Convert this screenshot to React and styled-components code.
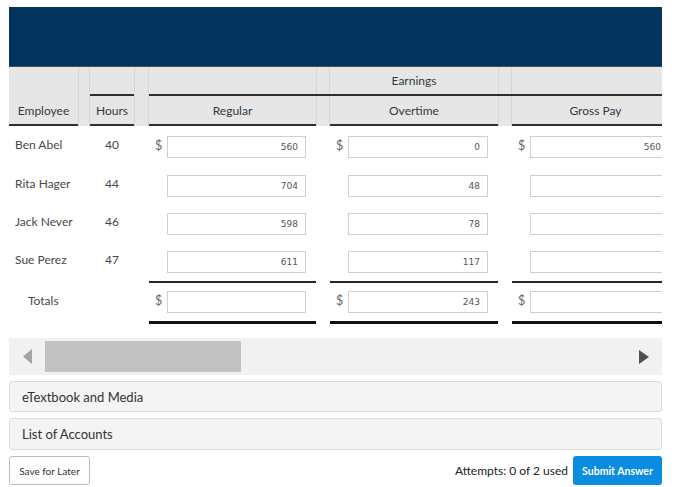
import React from 'react';
import styled, { createGlobalStyle } from 'styled-components';

const GlobalStyle = createGlobalStyle`
  html, body { margin: 0; padding: 0; background: #fff; }
  body { font-family: Lato, "Open Sans", sans-serif; }
`;

const COLS = '69px 12px 44px 15px 167px 14px 168px 14px 167px';

const Page = styled.div`
  width: 653px;
  padding: 7px 19px 0 9px;
`;

const Banner = styled.div`
  height: 59px;
  background: #02345f;
`;

const Viewport = styled.div`
  width: 653px;
  overflow: hidden;
`;

const HeadGrid = styled.div`
  display: grid;
  grid-template-columns: ${COLS};
  grid-template-rows: 29px 30px;
  width: 670px;
  background: #e6e6e6;
  border-top: 1px solid #4d4d4d;
`;

const HeadSpacer = styled.div`
  grid-column: ${p => p.$col};
  grid-row: 1 / 3;
  border-left: 1px solid #d6d6d6;
  border-right: 1px solid #d6d6d6;
`;

const HeadCell = styled.div`
  grid-column: ${p => p.$col};
  grid-row: ${p => p.$row};
  position: relative;
  z-index: 1;
  display: flex;
  align-items: center;
  justify-content: center;
  box-sizing: border-box;
  border-bottom: ${p => (p.$line ? '2px solid #2e2e2e' : 'none')};
  font-family: Lato, sans-serif;
  font-size: 12px;
  font-weight: 400;
  color: #2f3a46;
`;

const BodyGrid = styled.div`
  display: grid;
  grid-template-columns: ${COLS};
  grid-template-rows: 41px 38px 38px 38px auto;
  width: 670px;
`;

const TextCell = styled.div`
  grid-column: ${p => p.$col};
  display: flex;
  align-items: center;
  justify-content: ${p => (p.$center ? 'center' : 'flex-start')};
  padding: 0 0 5px ${p => p.$indent || 0}px;
  font-family: Lato, sans-serif;
  font-size: 12px;
  font-weight: 400;
  color: #484848;
`;

const MoneyCell = styled.div`
  grid-column: ${p => p.$col};
  display: flex;
  align-items: center;
  box-sizing: border-box;
  padding: 0 10px 0 6px;
  ${p => (p.$total ? 'height: 43px; border-top: 2px solid #262626; border-bottom: 3px solid #111;' : '')}
`;

const Dollar = styled.span`
  width: 12px;
  flex: none;
  padding-bottom: 3px;
  font-family: Lato, sans-serif;
  font-size: 12.5px;
  font-weight: 400;
  color: #666;
`;

const Field = styled.input`
  flex: 1;
  min-width: 0;
  height: 22px;
  box-sizing: border-box;
  border: 1px solid #cfcfcf;
  border-radius: 0;
  padding: 0 7px 0 4px;
  text-align: right;
  font-family: "DejaVu Sans", sans-serif;
  font-size: 9px;
  color: #555;
  background: #fff;
  outline: none;
`;

const ScrollBar = styled.div`
  margin-top: 14px;
  height: 37px;
  display: flex;
  align-items: stretch;
  background: #f1f1f1;
`;

const ArrowBtn = styled.div`
  width: 36px;
  flex: none;
  display: flex;
  align-items: center;
  justify-content: center;
`;

const Thumb = styled.div`
  width: 196px;
  margin: 3px 0;
  background: #c1c1c1;
`;

const Track = styled.div`
  flex: 1;
`;

const Panel = styled.div`
  margin-top: 6px;
  height: ${p => p.$h}px;
  box-sizing: border-box;
  display: flex;
  align-items: center;
  padding-left: 12px;
  background: #f4f4f4;
  border: 1px solid #dcdcdc;
  border-radius: 3px;
  font-family: Lato, sans-serif;
  font-size: 13px;
  color: #333;
`;

const Footer = styled.div`
  margin-top: 6px;
  display: flex;
  justify-content: space-between;
  align-items: center;
`;

const SaveButton = styled.button`
  width: 81px;
  height: 29px;
  box-sizing: border-box;
  background: #fff;
  border: 1px solid #bdbdbd;
  border-radius: 3px;
  font-family: Lato, sans-serif;
  font-size: 10px;
  color: #333;
  padding: 0;
`;

const RightGroup = styled.div`
  display: flex;
  align-items: center;
  gap: 5px;
`;

const Attempts = styled.span`
  font-family: Lato, sans-serif;
  font-size: 12px;
  color: #222;
`;

const SubmitButton = styled.button`
  width: 89px;
  height: 29px;
  box-sizing: border-box;
  background: #0a8de0;
  border: none;
  border-radius: 3px;
  font-family: Lato, sans-serif;
  font-size: 10.5px;
  font-weight: 700;
  color: #fff;
  padding: 0;
`;

const rows = [
  { name: 'Ben Abel', hours: '40', reg: '560', ot: '0', gross: '560', dollar: true },
  { name: 'Rita Hager', hours: '44', reg: '704', ot: '48', gross: '' },
  { name: 'Jack Never', hours: '46', reg: '598', ot: '78', gross: '' },
  { name: 'Sue Perez', hours: '47', reg: '611', ot: '117', gross: '' },
];

function Money({ col, value, dollar, total }) {
  return (
    <MoneyCell $col={col} $total={total}>
      <Dollar>{dollar ? '$' : ''}</Dollar>
      <Field readOnly defaultValue={value} />
    </MoneyCell>
  );
}

export default function App() {
  return (
    <>
      <GlobalStyle />
      <Page>
        <Banner />
        <Viewport>
          <HeadGrid>
            <HeadSpacer $col={2} />
            <HeadSpacer $col={4} />
            <HeadSpacer $col={6} />
            <HeadSpacer $col={8} />
            <HeadCell $col="3" $row="1" $line />
            <HeadCell $col="5 / 10" $row="1" $line>Earnings</HeadCell>
            <HeadCell $col="1" $row="2" $line>Employee</HeadCell>
            <HeadCell $col="3" $row="2" $line>Hours</HeadCell>
            <HeadCell $col="5" $row="2" $line>Regular</HeadCell>
            <HeadCell $col="7" $row="2" $line>Overtime</HeadCell>
            <HeadCell $col="9" $row="2" $line>Gross Pay</HeadCell>
          </HeadGrid>
          <BodyGrid>
            {rows.map(r => (
              <React.Fragment key={r.name}>
                <TextCell $col={1} $indent={6}>{r.name}</TextCell>
                <TextCell $col={3} $center>{r.hours}</TextCell>
                <Money col={5} value={r.reg} dollar={r.dollar} />
                <Money col={7} value={r.ot} dollar={r.dollar} />
                <Money col={9} value={r.gross} dollar={r.dollar} />
              </React.Fragment>
            ))}
            <TextCell $col={1} $indent={19}>Totals</TextCell>
            <Money col={5} value="" dollar total />
            <Money col={7} value="243" dollar total />
            <Money col={9} value="" dollar total />
          </BodyGrid>
        </Viewport>
        <ScrollBar>
          <ArrowBtn>
            <svg width="9" height="15" viewBox="0 0 9 15">
              <polygon points="9,0 9,15 0,7.5" fill="#a3a3a3" />
            </svg>
          </ArrowBtn>
          <Thumb />
          <Track />
          <ArrowBtn>
            <svg width="10" height="14" viewBox="0 0 10 14">
              <polygon points="0,0 10,7 0,14" fill="#505050" />
            </svg>
          </ArrowBtn>
        </ScrollBar>
        <Panel $h={31}>eTextbook and Media</Panel>
        <Panel $h={32}>List of Accounts</Panel>
        <Footer>
          <SaveButton>Save for Later</SaveButton>
          <RightGroup>
            <Attempts>Attempts: 0 of 2 used</Attempts>
            <SubmitButton>Submit Answer</SubmitButton>
          </RightGroup>
        </Footer>
      </Page>
    </>
  );
}
